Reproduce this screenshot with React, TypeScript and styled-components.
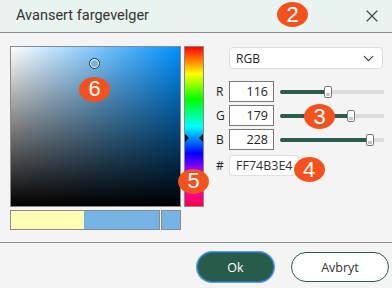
import { FunctionComponent } from 'react';
import styled, { createGlobalStyle } from 'styled-components';
import { ChevronDown, X } from 'lucide-react';

const GlobalStyle = createGlobalStyle`
  html, body {
    margin: 0;
    padding: 0;
    background: #f4f4f4;
  }
  * {
    box-sizing: border-box;
  }
`;

const Dialog = styled.div`
  position: relative;
  width: 392px;
  height: 288px;
  display: flex;
  flex-direction: column;
  background: #f4f4f4;
  font-family: 'Open Sans', 'Noto Sans', sans-serif;
  color: #222;
  overflow: hidden;
`;

const Header = styled.div`
  height: 33px;
  flex: none;
  display: flex;
  align-items: center;
  justify-content: space-between;
  padding: 0 10px 1px 16px;
  background: #e9f3f0;
  border-bottom: 1px solid #8a8a8a;
`;

const Title = styled.h1`
  margin: 0;
  font-family: Roboto, 'Liberation Sans', sans-serif;
  font-weight: 400;
  font-size: 14.5px;
  color: #333;
`;

const CloseButton = styled.button`
  display: flex;
  padding: 0;
  border: 0;
  background: none;
  color: #444;
`;

const Body = styled.div`
  flex: 1;
  display: flex;
  padding: 13px 0 0 10px;
`;

const LeftColumn = styled.div`
  width: 194px;
  display: flex;
  flex-direction: column;
  gap: 3px;
`;

const PickerRow = styled.div`
  display: flex;
  gap: 3px;
`;

const SatValSquare = styled.div<{ hue: number }>`
  position: relative;
  width: 171px;
  height: 161px;
  border: 1px solid #8a8a8a;
  background:
    linear-gradient(to top, #000, rgba(0, 0, 0, 0)),
    linear-gradient(to right, #fff, rgba(255, 255, 255, 0)),
    hsl(${props => props.hue}, 100%, 50%);
`;

const Marker = styled.div`
  position: absolute;
  width: 11px;
  height: 11px;
  margin: -5.5px 0 0 -5.5px;
  border-radius: 50%;
  border: 1.5px solid #333;
  box-shadow: inset 0 0 0 1px #fff;
`;

const HueBar = styled.div`
  position: relative;
  width: 20px;
  height: 161px;
  border: 1px solid #8a8a8a;
  background: linear-gradient(
    to bottom,
    #f00 0%,
    #ff0 17%,
    #0f0 33%,
    #0ff 50%,
    #00f 67%,
    #f0f 83%,
    #ff0040 100%
  );
`;

const HueArrow = styled.div<{ side: 'left' | 'right' }>`
  position: absolute;
  ${props => props.side}: 0;
  width: 0;
  height: 0;
  margin-top: -4px;
  border-top: 4px solid transparent;
  border-bottom: 4px solid transparent;
  ${props =>
    props.side === 'left'
      ? 'border-left: 4px solid #111;'
      : 'border-right: 4px solid #111;'}
`;

const SwatchRow = styled.div`
  display: flex;
  gap: 1px;
  height: 20px;
`;

const CompareSwatch = styled.div`
  width: 150px;
  display: flex;
  border: 1px solid #8a8a8a;
`;

const Swatch = styled.div<{ color: string; grow?: number; width?: number }>`
  background: ${props => props.color};
  ${props => (props.width ? `width: ${props.width}px;` : '')}
  ${props => (props.grow ? `flex: ${props.grow};` : '')}
`;

const CurrentSwatch = styled.div<{ color: string }>`
  width: 20px;
  border: 1px solid #8a8a8a;
  background: ${props => props.color};
`;

const RightColumn = styled.div`
  margin-left: 12px;
  width: 168px;
  display: flex;
  flex-direction: column;
`;

const Select = styled.div`
  margin: 1px 0 0 13px;
  width: 154px;
  height: 22px;
  display: flex;
  align-items: center;
  justify-content: space-between;
  padding: 0 5px 0 6px;
  background: #fff;
  border: 1px solid #dcdcdc;
  border-radius: 4px;
  font-size: 12px;
  color: #222;
`;

const Channels = styled.div`
  margin-top: 12px;
  display: flex;
  flex-direction: column;
  gap: 3px;
`;

const ChannelRow = styled.div`
  display: flex;
  align-items: center;
  height: 21px;
`;

const Label = styled.span`
  width: 13px;
  font-size: 12px;
  color: #222;
`;

const NumberBox = styled.div`
  width: 45px;
  height: 21px;
  padding: 0 5px;
  display: flex;
  align-items: center;
  justify-content: flex-end;
  background: #fff;
  border: 1px solid #777;
  font-size: 12.5px;
`;

const HexRow = styled(ChannelRow)`
  margin-top: 2px;
`;

const HexBox = styled.div`
  width: 70px;
  height: 21px;
  padding: 0 6px;
  display: flex;
  align-items: center;
  background: #fff;
  border: 1px solid #e0e0e0;
  border-radius: 3px;
  font-size: 12.5px;
  color: #333;
`;

const Track = styled.div`
  position: relative;
  margin-left: 6px;
  width: 104px;
  height: 4px;
  background: #dcdcd8;
`;

const TrackFill = styled.div`
  position: absolute;
  left: 0;
  top: 0;
  bottom: 0;
  background: #2a5c4a;
  border-radius: 2px 0 0 2px;
`;

const Thumb = styled.div`
  position: absolute;
  top: 50%;
  width: 8px;
  height: 12px;
  margin: -6px 0 0 -4px;
  background: #fff;
  border: 1px solid #777;
  border-radius: 2px;

  &::after {
    content: '';
    position: absolute;
    left: 1px;
    right: 1px;
    bottom: 1px;
    height: 3px;
    background: #c8c8c8;
  }
`;

const Footer = styled.div`
  height: 46px;
  flex: none;
  display: flex;
  justify-content: flex-end;
  align-items: flex-start;
  gap: 17px;
  padding: 9px 3px 0 0;
  border-top: 1px solid #8a8a8a;
`;

const Button = styled.button<{ primary?: boolean }>`
  height: 30px;
  width: ${props => (props.primary ? 77 : 98)}px;
  border-radius: 15px;
  font-family: 'Open Sans', 'Noto Sans', sans-serif;
  font-size: 12.5px;
  background: ${props => (props.primary ? '#285c4a' : '#fff')};
  color: ${props => (props.primary ? '#fff' : '#333')};
  border: 1px solid ${props => (props.primary ? '#2f6fbf' : '#2a5c4a')};
  box-shadow: ${props => (props.primary ? '0 0 0 1px #5b9bd8' : 'none')};
`;

const Badge = styled.div`
  position: absolute;
  width: 31px;
  height: 25px;
  margin: -12.5px 0 0 -15.5px;
  border-radius: 50%;
  background: #f4511e;
  color: #fff;
  display: flex;
  align-items: center;
  justify-content: center;
  font-family: 'Liberation Sans', Arial, sans-serif;
  font-size: 22px;
  line-height: 1;
`;

type Channel = { id: string; value: number };

const channels: Channel[] = [
  { id: 'R', value: 116 },
  { id: 'G', value: 179 },
  { id: 'B', value: 228 },
];

const badges = [
  { n: 2, x: 292.5, y: 14.5 },
  { n: 3, x: 319.5, y: 116.5 },
  { n: 4, x: 309, y: 169.5 },
  { n: 5, x: 193.5, y: 181 },
  { n: 6, x: 94.5, y: 89 },
];

const App: FunctionComponent = () => {
  const hue = 206;
  const sat = 112 / 228;
  const val = 228 / 255;

  return (
    <Dialog>
      <GlobalStyle />
      <Header>
        <Title>Avansert fargevelger</Title>
        <CloseButton>
          <X size={20} strokeWidth={1.4} />
        </CloseButton>
      </Header>
      <Body>
        <LeftColumn>
          <PickerRow>
            <SatValSquare hue={hue}>
              <Marker
                style={{
                  left: `${sat * 100}%`,
                  top: `${(1 - val) * 100}%`,
                }}
              />
            </SatValSquare>
            <HueBar>
              <HueArrow side="left" style={{ top: `${(hue / 360) * 100}%` }} />
              <HueArrow side="right" style={{ top: `${(hue / 360) * 100}%` }} />
            </HueBar>
          </PickerRow>
          <SwatchRow>
            <CompareSwatch>
              <Swatch color="#ffffb4" width={73} />
              <Swatch color="#74b3e4" grow={1} />
            </CompareSwatch>
            <CurrentSwatch color="#74b3e4" />
          </SwatchRow>
        </LeftColumn>
        <RightColumn>
          <Select>
            <span>RGB</span>
            <ChevronDown size={17} strokeWidth={1.6} color="#333" />
          </Select>
          <Channels>
            {channels.map(channel => (
              <ChannelRow key={channel.id}>
                <Label>{channel.id}</Label>
                <NumberBox>{channel.value}</NumberBox>
                <Track>
                  <TrackFill
                    style={{ width: `${4 + (channel.value / 255) * 96}px` }}
                  />
                  <Thumb
                    style={{ left: `${4 + (channel.value / 255) * 96}px` }}
                  />
                </Track>
              </ChannelRow>
            ))}
            <HexRow>
              <Label>#</Label>
              <HexBox>FF74B3E4</HexBox>
            </HexRow>
          </Channels>
        </RightColumn>
      </Body>
      <Footer>
        <Button primary>Ok</Button>
        <Button>Avbryt</Button>
      </Footer>
      {badges.map(badge => (
        <Badge key={badge.n} style={{ left: badge.x, top: badge.y }}>
          {badge.n}
        </Badge>
      ))}
    </Dialog>
  );
};

export default App;
